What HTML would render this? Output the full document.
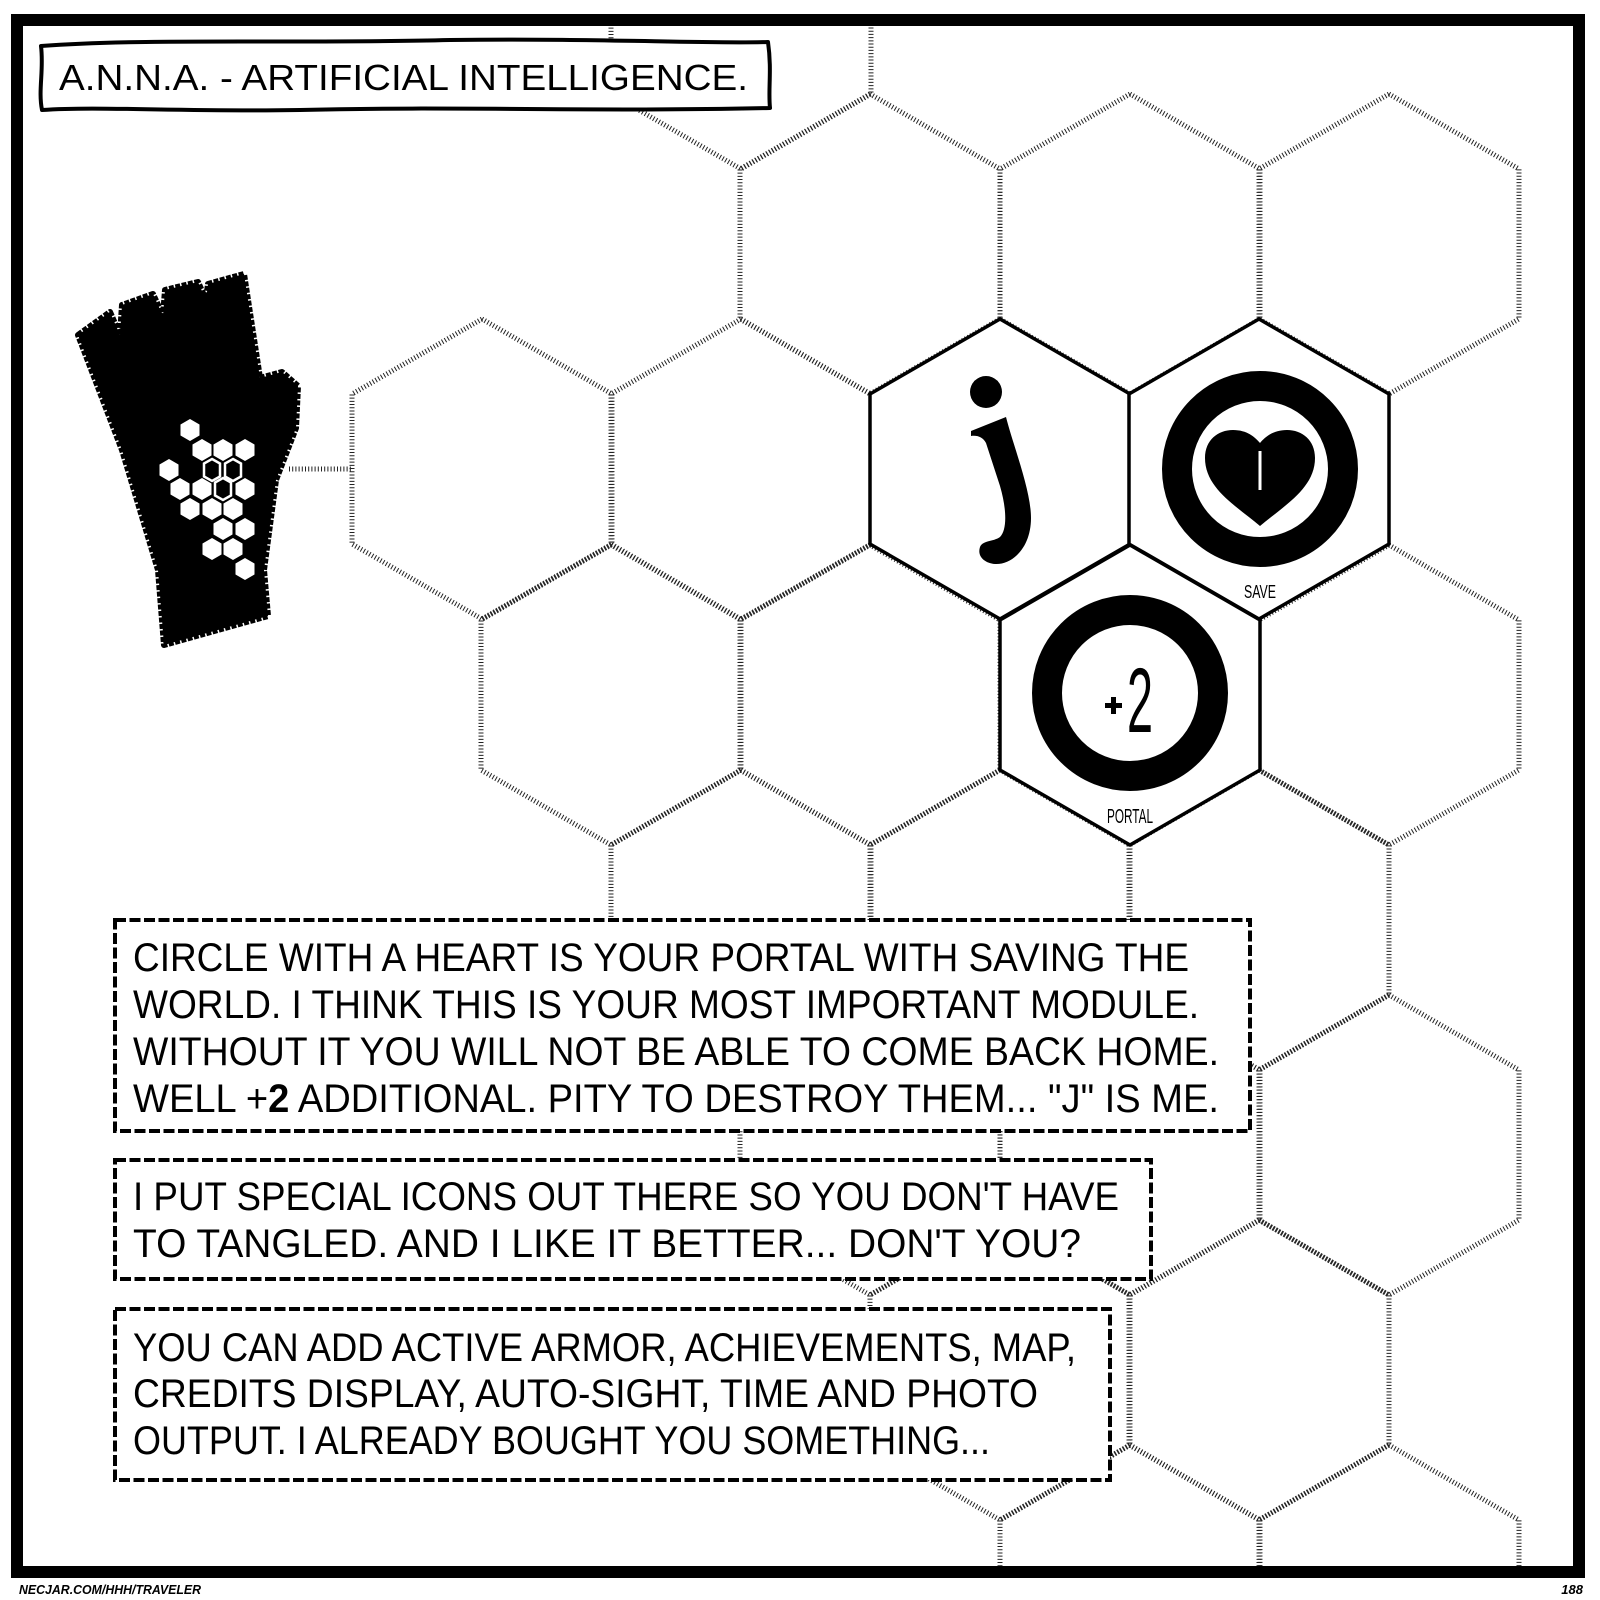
<!DOCTYPE html>
<html><head><meta charset="utf-8"><style>
html,body{margin:0;padding:0;background:#fff;overflow:hidden;width:1600px;height:1600px;}
svg{display:block;}
text{font-family:"Liberation Sans",sans-serif;}
</style></head><body>
<svg width="1600" height="1600" viewBox="0 0 1600 1600" xmlns="http://www.w3.org/2000/svg">
<defs>
<polygon id="hx" points="0,-150 130,-75 130,75 0,150 -130,75 -130,-75"/>
<polygon id="sh" points="0,-11 9.5,-5.5 9.5,5.5 0,11 -9.5,5.5 -9.5,-5.5"/>
<clipPath id="inner"><rect x="24" y="26" width="1549" height="1540"/></clipPath>
</defs>
<rect width="1600" height="1600" fill="#fff"/>

<g clip-path="url(#inner)" fill="none" stroke="#222" stroke-width="5" stroke-dasharray="1 2.2">
<use href="#hx" x="741" y="19"/>
<use href="#hx" x="870" y="244"/><use href="#hx" x="1130" y="244"/><use href="#hx" x="1389" y="244"/>
<use href="#hx" x="482" y="469"/><use href="#hx" x="741" y="469"/>
<use href="#hx" x="611" y="695"/><use href="#hx" x="870" y="695"/><use href="#hx" x="1389" y="695"/>
<use href="#hx" x="741" y="920"/><use href="#hx" x="1000" y="920"/><use href="#hx" x="1259" y="920"/>
<use href="#hx" x="870" y="1145"/><use href="#hx" x="1130" y="1145"/><use href="#hx" x="1389" y="1145"/>
<use href="#hx" x="1000" y="1370"/><use href="#hx" x="1259" y="1370"/>
<use href="#hx" x="1130" y="1595"/><use href="#hx" x="1389" y="1595"/>
<line x1="289" y1="469" x2="352" y2="469"/>
</g>

<g fill="#fff" stroke="#000" stroke-width="3.5">
<use href="#hx" x="1000" y="469"/>
<use href="#hx" x="1259" y="469"/>
<use href="#hx" x="1130" y="695"/>
</g>

<circle cx="986" cy="392" r="16" fill="#000"/>
<path d="M971,431 L1006,417 C1013,445 1031,490 1031,518 C1031,548 1012,565 995,564 C984,563 977,556 980,547 C983,540 993,542 1000,537 C1007,530 1007,510 1000,486 L986,443 C983,437 977,435 971,436 Z" fill="#000"/>

<circle cx="1260" cy="469" r="83" fill="none" stroke="#000" stroke-width="30"/>
<path d="M1260,526 C1235,505 1205,488 1205,458 C1205,440 1218,430 1233,430 C1247,430 1255,437 1260,443 C1265,437 1273,430 1287,430 C1302,430 1315,440 1315,458 C1315,488 1285,505 1260,526 Z" fill="#000"/>
<rect x="1258.5" y="451" width="3" height="39" fill="#fff"/>
<text x="1260" y="598" font-size="18" text-anchor="middle" textLength="32" lengthAdjust="spacingAndGlyphs">SAVE</text>

<circle cx="1130" cy="693" r="83" fill="none" stroke="#000" stroke-width="30"/>
<rect x="1105" y="703" width="17" height="5" fill="#000"/>
<rect x="1111" y="697" width="5" height="17" fill="#000"/>
<text x="1140" y="732" font-size="92" text-anchor="middle" textLength="26" lengthAdjust="spacingAndGlyphs">2</text>
<text x="1130" y="823" font-size="20" text-anchor="middle" textLength="46" lengthAdjust="spacingAndGlyphs">PORTAL</text>

<path d="M78,335 L110,312 L120,335 L122,305 L153,294 L163,316 L165,290 L198,282 L206,300 L208,284 L244,274 L260,378 L282,372 L298,386 L296,428 L276,480 L264,570 L268,616 L164,645 L158,570 L122,450 Z" fill="#000" stroke="#000" stroke-width="6" stroke-linejoin="round" stroke-dasharray="5 1.5"/>
<g fill="#fff">
<use href="#sh" x="190" y="430"/>
<use href="#sh" x="202" y="450"/><use href="#sh" x="223" y="450"/><use href="#sh" x="245" y="450"/>
<use href="#sh" x="169" y="470"/>
<use href="#sh" x="180" y="489"/><use href="#sh" x="202" y="489"/><use href="#sh" x="245" y="489"/>
<use href="#sh" x="190" y="509"/><use href="#sh" x="212" y="509"/><use href="#sh" x="233" y="509"/>
<use href="#sh" x="223" y="529"/><use href="#sh" x="245" y="529"/>
<use href="#sh" x="212" y="549"/><use href="#sh" x="233" y="549"/>
<use href="#sh" x="245" y="569"/>
</g>
<g fill="#000" stroke="#fff" stroke-width="2.5">
<polygon points="212,459 220,463.5 220,476.5 212,481 204,476.5 204,463.5"/>
<polygon points="233,459 241,463.5 241,476.5 233,481 225,476.5 225,463.5"/>
<polygon points="223,478 231,482.5 231,495.5 223,500 215,495.5 215,482.5"/>
</g>

<path d="M41,46 C150,38 300,44 450,40 C600,38 700,44 768,42 C772,70 768,90 770,108 C600,112 450,106 300,110 C180,112 100,106 42,110 C38,90 44,70 41,46 Z" fill="#fff" stroke="#000" stroke-width="4" stroke-linejoin="round"/>
<text x="59" y="90" font-size="36" textLength="689" lengthAdjust="spacingAndGlyphs">A.N.N.A. - ARTIFICIAL INTELLIGENCE.</text>

<g fill="#fff" stroke="#000" stroke-width="4" stroke-dasharray="11 3.5">
<rect x="115" y="920" width="1135" height="211"/>
<rect x="115" y="1160" width="1036" height="119"/>
<rect x="115" y="1309" width="995" height="171"/>
</g>
<g font-size="40" fill="#000">
<text x="133" y="971" textLength="1056" lengthAdjust="spacingAndGlyphs">CIRCLE WITH A HEART IS YOUR PORTAL WITH SAVING THE</text>
<text x="133" y="1018" textLength="1066" lengthAdjust="spacingAndGlyphs">WORLD. I THINK THIS IS YOUR MOST IMPORTANT MODULE.</text>
<text x="133" y="1065" textLength="1086" lengthAdjust="spacingAndGlyphs">WITHOUT IT YOU WILL NOT BE ABLE TO COME BACK HOME.</text>
<text x="133" y="1112" textLength="1086" lengthAdjust="spacingAndGlyphs">WELL +<tspan font-weight="bold">2</tspan> ADDITIONAL. PITY TO DESTROY THEM... "J" IS ME.</text>
<text x="133" y="1210" textLength="986" lengthAdjust="spacingAndGlyphs">I PUT SPECIAL ICONS OUT THERE SO YOU DON'T HAVE</text>
<text x="133" y="1257" textLength="948" lengthAdjust="spacingAndGlyphs">TO TANGLED. AND I LIKE IT BETTER... DON'T YOU?</text>
<text x="133" y="1361" textLength="943" lengthAdjust="spacingAndGlyphs">YOU CAN ADD ACTIVE ARMOR, ACHIEVEMENTS, MAP,</text>
<text x="133" y="1407" textLength="905" lengthAdjust="spacingAndGlyphs">CREDITS DISPLAY, AUTO-SIGHT, TIME AND PHOTO</text>
<text x="133" y="1454" textLength="857" lengthAdjust="spacingAndGlyphs">OUTPUT. I ALREADY BOUGHT YOU SOMETHING...</text>
</g>

<rect x="17" y="20" width="1562" height="1552" fill="none" stroke="#000" stroke-width="12"/>

<text x="19" y="1594" font-size="13" font-weight="bold" font-style="italic" textLength="182" lengthAdjust="spacingAndGlyphs">NECJAR.COM/HHH/TRAVELER</text>
<text x="1583" y="1594" font-size="13" font-weight="bold" font-style="italic" text-anchor="end">188</text>
</svg>
</body></html>
